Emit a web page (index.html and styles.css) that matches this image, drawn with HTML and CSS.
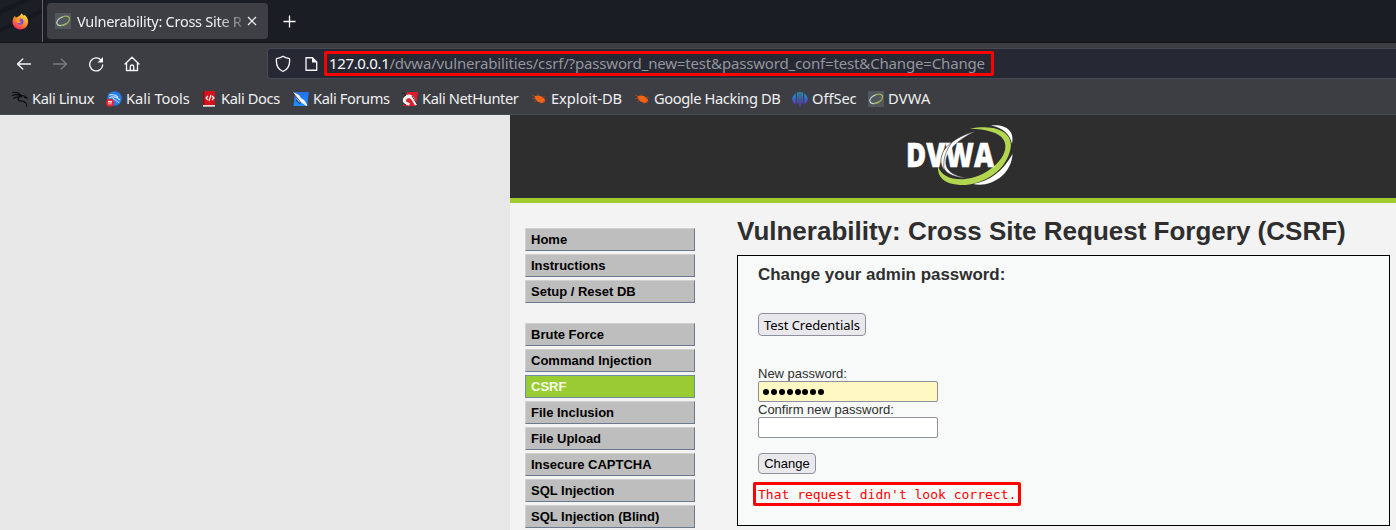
FILE: index.html
```html
<!DOCTYPE html>
<html lang="en">
<head>
<meta charset="utf-8">
<title>Vulnerability: Cross Site Request Forgery (CSRF)</title>
<link rel="stylesheet" href="styles.css">
</head>
<body>
<svg class="defs" width="0" height="0" aria-hidden="true">
  <defs>
    <symbol id="ring" viewBox="0 0 16 16"><path d="M0 0h16v16H0z" fill="#50585e"/><path d="M8 3.800C4 4.800 1 8 2 10.800s6 2 9 0" fill="none" stroke="#c3cec5" stroke-width="1.200"/><path d="M7 4c4-1.500 8-1 7.500 2.500C14 9.500 10 12.500 6 12.600" fill="none" stroke="#9dac57" stroke-width="1.300"/></symbol>
    <symbol id="bug" viewBox="0 0 16 16"><path d="M3.500 5l4-.5 4 1.200 2.500 3-.5 2.500-3 .8-4-1.500L4 8z" fill="#f26315"/><path d="M1 4l3 1.500M.8 7.500h4M3 11l3-2M7 2.800l.5 2M11 7l3.500-1M12 10l2.500 1M9 11l1 2" stroke="#a94a1f" stroke-width=".8"/></symbol>
    <symbol id="dragon" viewBox="0 0 16 16"><path d="M.5 1.500C5 .5 8 3 9.500 4.500M0 4.500c4-1.500 8-.5 10 1M1.500 7.500c2-1.500 5-2 8-1.500M9 4.500c3-.5 4 .5 6 2.500l-3-.5M9.500 5.500C4 5 6 10 9 10s5 .5 6 5.500M9.500 10c2 0 3.500 1 4.500 2" fill="none" stroke="currentColor" stroke-width="1.100"/></symbol>
    <linearGradient id="flame" x1=".8" y1="0" x2=".2" y2="1"><stop offset="0" stop-color="#fff04a"/><stop offset=".45" stop-color="#ff9428"/><stop offset="1" stop-color="#f72168"/></linearGradient>
    <linearGradient id="off" gradientUnits="userSpaceOnUse" x1="0" y1="1" x2="0" y2="15"><stop stop-color="#16a4c6"/><stop offset="1" stop-color="#632bd4"/></linearGradient>
    <linearGradient id="blue" x2="0" y2="1"><stop stop-color="#256fe3"/><stop offset="1" stop-color="#1c91ff"/></linearGradient>
  </defs>
</svg>

<header class="browser">
  <div class="tabs">
    <div class="pinned">
      <svg width="17" height="17" viewBox="0 0 17 17"><path d="M8 2.500L9.800.2c.8 1.200 1.200 1.800 2 2.300l1-.5c2.200 1.800 3.200 4 3.300 6.500.2 4.400-3.400 8-7.800 8S.5 13 .5 8.800C.5 6 1.500 4.500 3 2.700l.8 2z" fill="url(#flame)"/><circle cx="8.300" cy="8.600" r="3.200" fill="#7b4be6"/><path d="M4 5.200c2-.8 3.500.3 4.500.8L7.200 7.800l2 1c-.8 1.800-3 1.800-4.400.4z" fill="#ff9a25"/></svg>
    </div>
    <div class="tab">
      <svg width="16" height="16"><use href="#ring"/></svg>
      <span class="tab-title">Vulnerability: Cross Site R</span>
      <svg class="close" width="10" height="10" viewBox="0 0 10 10"><path d="M1 1l8 8M9 1L1 9" stroke="#f4f4f5" stroke-width="1.200"/></svg>
    </div>
    <svg class="plus" width="13" height="13" viewBox="0 0 13 13"><path d="M6.500.5v12M.5 6.500h12" stroke="#fbfbfe" stroke-width="1.300"/></svg>
  </div>

  <nav class="toolbar">
    <div class="controls">
      <svg width="16" height="16" viewBox="0 0 16 16" class="icon"><path d="M14.500 8H2M6.800 3L1.500 8l5.300 5"/></svg>
      <svg width="16" height="16" viewBox="0 0 16 16" class="icon dim"><path d="M1.500 8H14M9.200 3l5.300 5-5.300 5"/></svg>
      <svg width="16" height="16" viewBox="0 0 16 16" class="icon"><path d="M13 4A6.500 6.500 0 1 0 14.700 9"/><path d="M15 1v5.500H9.500z" fill="#fbfbfe" stroke="none"/></svg>
      <svg width="16" height="16" viewBox="0 0 16 16" class="icon"><path d="M1 8l7-6.800L15 8M2.500 7v7.500h11V7M6.300 14.500V10.500c0-2 3.400-2 3.400 0v4"/></svg>
    </div>
    <div class="address">
      <svg width="16" height="18" viewBox="0 0 16 18" class="icon"><path d="M8 1.200c2 1.500 4 2 6.500 2.500C15.200 10 12.500 14.500 8 16.500 3.500 14.500.8 10 1.500 3.700 4 3.200 6 2.700 8 1.200z"/></svg>
      <svg width="13" height="16" viewBox="0 0 13 16" class="icon"><path d="M1 1.700h6.500l4.200 4.200v8.300H1z"/><path d="M7 1.500V6.500h5z" fill="#fbfbfe" stroke="none"/></svg>
      <div class="url"><span class="host">127.0.0.1</span>/dvwa/vulnerabilities/csrf/?password_new=test&amp;password_conf=test&amp;Change=Change</div>
    </div>
  </nav>

  <nav class="bookmarks">
    <span class="bookmark tight"><svg width="16" height="16" color="#080909"><use href="#dragon"/></svg><span>Kali Linux</span></span>
    <span class="bookmark"><svg width="16" height="16" viewBox="0 0 16 16"><circle cx="8.500" cy="7.500" r="7.300" fill="#247bed"/><path d="M3 4c4-1 7 0 9 2M3 7c4-2 8-1 11 2M7 7c0 2 4 2 6 5" fill="none" stroke="#c7e5ff" stroke-width="1.100"/><circle cx="4" cy="11.700" r="4" fill="#e8232d"/><path d="M2 10.500h4M3 10.500v3M5 10.500v3" stroke="#fff" stroke-width=".9"/></svg><span>Kali Tools</span></span>
    <span class="bookmark tight"><svg width="14" height="16" viewBox="0 0 14 16"><path d="M0 1h2v14H0z" fill="#98080f"/><path d="M1.500 0H12v14H1.500z" fill="#d51219"/><path d="M0 14h12v1.700H0z" fill="#e7dddd"/><path d="M5 5L3 7l2 2M9 5l2 2-2 2M8 4L6 10" fill="none" stroke="#fff" stroke-width="1.200"/></svg><span>Kali Docs</span></span>
    <span class="bookmark tight"><svg width="17" height="16" viewBox="0 0 17 16"><path d="M3 1h14l-2 14H1.500z" fill="url(#blue)"/><path d="M1 1l6 3 2 3 3 2 3.500 5-1 1-4.500-3-3-1-2-3z" fill="#f7f9fb"/><path d="M0 1l6 7 3 4M4 9l4 4" fill="none" stroke="#17232d" stroke-width=".9"/></svg><span>Kali Forums</span></span>
    <span class="bookmark tight"><svg width="16" height="16" viewBox="0 0 16 16"><path d="M5 1h11l-2 14H1z" fill="#da1e2c"/><path d="M1 8C2 4 7 2.500 10 4.500c3 2 3.500 6 5 9l-2 1-3-5C8 5.500 4 7.500 4 9.500s3 1.500 4 3L7 14.500C3 14 0 12 1 8z" fill="#f4efef"/><path d="M0 2l3 1M1 6l3-2M1 12l3 2M10 5l5 8" fill="none" stroke="#24191b" stroke-width=".9"/></svg><span>Kali NetHunter</span></span>
    <span class="bookmark"><svg width="16" height="16"><use href="#bug"/></svg><span>Exploit-DB</span></span>
    <span class="bookmark tight"><svg width="16" height="16"><use href="#bug"/></svg><span>Google Hacking DB</span></span>
    <span class="bookmark"><svg width="16" height="16" viewBox="0 0 16 16"><path d="M3.700 2.500c-4.500 3-4.500 8 0 11zM5 1.500L6.500 1v12L5 12zM9.500 1l1.500.5V12l-1.500 1zM12.300 2.500c4.500 3 4.500 8 0 11zM7.300 1h1.400v14.500H7.300z" fill="url(#off)"/></svg><span>OffSec</span></span>
    <span class="bookmark loose"><svg width="16" height="16"><use href="#ring"/></svg><span>DVWA</span></span>
  </nav>
</header>

<div class="page">
  <div class="container">
    <header class="banner">
      <svg width="110" height="66" viewBox="0 0 110 66" role="img" aria-label="DVWA">
        <path d="M84 2.500C99 1 108 8 105 21c-2-10-9-16-21-18.500zM105.500 31c-1 21-22 34-39.500 30 17-3 30-13 39.500-30z" fill="#fff"/>
        <path d="M63 5.700C94 0 108 13 103 28 97 51 72 63 53 62 37 61 30 54 31 43c5 16 29 17 48 6 22-13 27-34 6-40C78 6.500 71 5.800 63 5.700z" fill="#b2d64f"/>
        <path d="M68 8.500C24 20 25 56 61 54.500 29 53 32 25 68 8.500z" fill="#fff" stroke="#2e2e2e" stroke-width=".5"/>
        <text class="logo-text" x="-1" y="43.500" textLength="88" lengthAdjust="spacingAndGlyphs">DVWA</text>
        <path d="M45 19C34 27 31 39 37 47c-1-10 1-18 8-28z" fill="#fff" stroke="#2e2e2e" stroke-width=".6"/>
      </svg>
    </header>
    <div class="columns">
      <nav class="menu">
        <ul><li>Home</li><li>Instructions</li><li>Setup / Reset DB</li></ul>
        <ul><li>Brute Force</li><li>Command Injection</li><li class="selected">CSRF</li><li>File Inclusion</li><li>File Upload</li><li>Insecure CAPTCHA</li><li>SQL Injection</li><li>SQL Injection (Blind)</li></ul>
      </nav>
      <main class="content">
        <h1>Vulnerability: Cross Site Request Forgery (CSRF)</h1>
        <section class="panel">
          <h3>Change your admin password:</h3>
          <button class="credentials" type="button">Test Credentials</button>
          <form class="form">
            <label for="new">New password:</label>
            <div class="field filled" id="new"><i></i><i></i><i></i><i></i><i></i><i></i><i></i><i></i></div>
            <label for="confirm">Confirm new password:</label>
            <input class="field" id="confirm" type="password">
            <button class="change" type="button">Change</button>
          </form>
          <pre class="error">That request didn't look correct.</pre>
        </section>
      </main>
    </div>
  </div>
</div>
</body>
</html>
```
FILE: styles.css
```css
* { box-sizing: border-box; }
body { margin: 0; width: 1396px; height: 530px; overflow: hidden; background: #e7e7e7; font-family: "Liberation Sans", Arial, sans-serif; font-size: 13px; color: #2e2e2e; }
svg { display: block; flex: none; }
.defs { position: absolute; }
.browser { height: 115px; background: #3d3e43; font-family: "Noto Sans", sans-serif; color: #f0f0f2; border-bottom: 1px solid #4a4a55; }
.tabs { height: 43px; background: #1a1d24; border-bottom: 1px solid #111319; display: flex; align-items: center; }
.pinned { width: 43px; height: 42px; border-right: 1px solid #62646a; padding: 13px 0 0 12px; background: linear-gradient(155deg, #1b1e25 0 15%, #15181e 17% 23%, #1b1e25 25% 45%, #15181e 47% 52%, #1b1e25 54%); }
.tab { width: 221px; height: 36px; margin-left: 4px; padding-left: 8px; border-radius: 4px; background: #3e3f44; display: flex; align-items: center; }
.tab-title { width: 168px; margin-left: 6px; white-space: nowrap; font-size: 14.5px; letter-spacing: -.27px; line-height: 20px; mask-image: linear-gradient(90deg, #000 140px, transparent 175px); }
.close { margin-left: 2px; }
.plus { margin-left: 15px; }
.toolbar { height: 41px; display: flex; align-items: center; }
.controls { width: 267px; padding-left: 16px; display: flex; gap: 20px; }
.icon { fill: none; stroke: #f4f4f6; stroke-width: 1.35; stroke-linejoin: round; stroke-linecap: round; }
.dim { stroke: #7b7c80; }
.address { width: 1129px; height: 31px; background: #262833; border: 1px solid #464854; border-right: 0; border-radius: 4px 0 0 4px; padding-left: 7px; display: flex; align-items: center; }
.address .icon + .icon { margin-left: 14px; }
.url { width: 670px; height: 25px; margin-left: 6px; padding-left: 2px; border: 3px solid #fe0000; border-radius: 2px; color: #94969c; font-size: 15px; letter-spacing: -.165px; line-height: 18px; white-space: nowrap; }
.host { color: #fbfbfe; letter-spacing: -.35px; }
.bookmarks { height: 29px; padding-left: 12px; display: grid; grid-template-columns: 94px 97px 89px 110px 129px 103px 158px 76px 80px; align-items: center; }
.bookmark { display: flex; align-items: center; gap: 4px; font-size: 14.67px; letter-spacing: -.05px; line-height: 20px; white-space: nowrap; }
.bookmark span { padding-bottom: 2px; }
.tight { letter-spacing: -.39px; }
.loose { letter-spacing: .2px; }
.page { height: 415px; padding-left: 510px; }
.container { height: 415px; background: #f3f3f3; }
.banner { height: 88px; background: #2e2e2e; border-bottom: 5px solid #a1cc2f; padding: 8px 0 0 397px; }
.logo-text { font: 800 33px "Open Sans", sans-serif; fill: #fff; stroke: #fff; stroke-width: .5; }
.columns { display: flex; padding-left: 15px; }
.menu { width: 212px; padding-top: 25px; }
.menu ul { list-style: none; margin: 0 0 20px; padding: 0; display: grid; gap: 3px; }
.menu li { width: 170px; height: 23px; padding-left: 5px; background: #bebebe; border: 1px solid #d0d0d0; border-right-color: #6b7a8f; border-bottom-color: #6b7a8f; color: #000; font-weight: bold; line-height: 21px; }
.menu .selected { background: #9c3; color: #f5ffe8; border-color: #708da0; }
.content { width: 653px; }
h1 { margin: 13px 0 9px; font-size: 26px; line-height: 30px; white-space: nowrap; }
.panel { height: 271px; padding: 9px 20px 0; background: #f8faf9; border: 1px solid #000; }
h3 { margin: 0 0 28px; font-size: 16.93px; line-height: 20px; }
button { display: block; padding: 0; border: 1px solid #8f8f9d; border-radius: 4px; background: #e9e9ed; color: #000; }
.credentials { width: 108px; height: 23px; padding-top: 1px; font: 13px/20px "Noto Sans", sans-serif; letter-spacing: -.07px; }
.form { margin-top: 30px; }
label { display: block; height: 15px; line-height: 15px; }
.field { display: flex; align-items: center; width: 180px; height: 21px; padding: 0 4px; background: #fff; border: 1px solid #8f8f9d; border-radius: 2px; }
.filled { background: #fef9c3; gap: 1.9px; }
.filled i { width: 6px; height: 6px; border-radius: 50%; background: #000; }
.change { width: 58px; height: 21px; margin-top: 15px; font: 13px/19px "Liberation Sans", Arial, sans-serif; }
.error { width: 268px; height: 24px; margin: 8px 0 0 -5px; padding-left: 2px; border: 3px solid #fe0000; border-radius: 2px; color: #fe0000; font: 13px/19px "DejaVu Sans Mono", monospace; }
```
